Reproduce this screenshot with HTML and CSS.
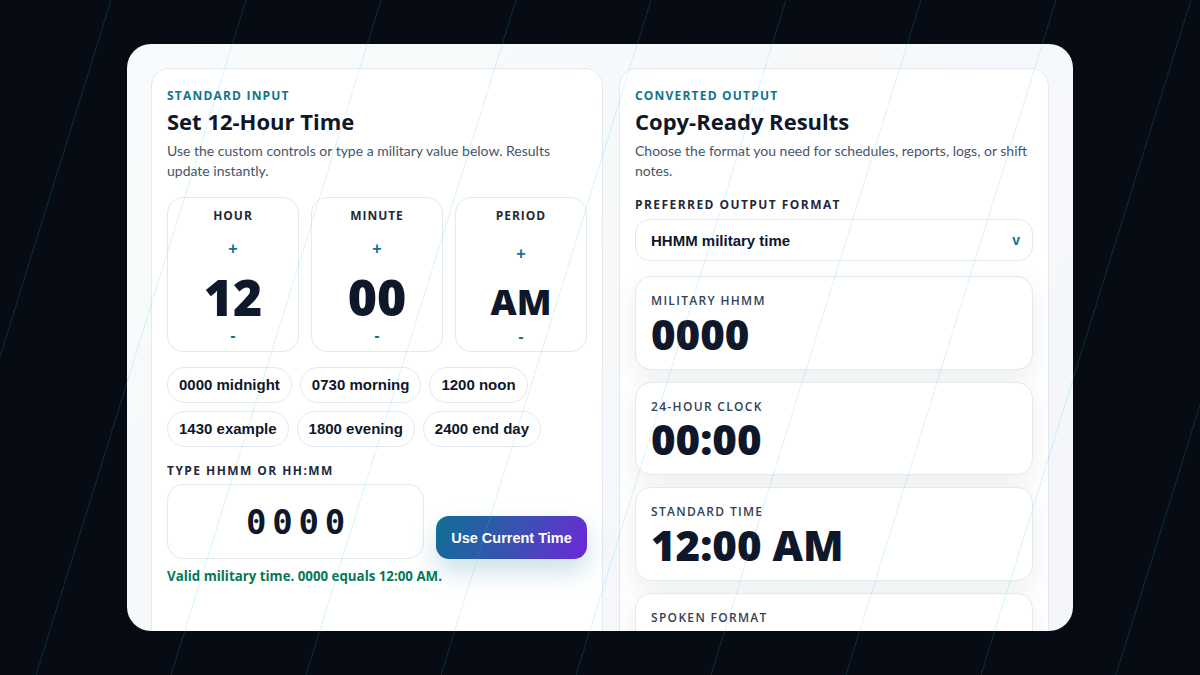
FILE: index.html
```html
<!DOCTYPE html>
<html lang="en">
<head>
<meta charset="utf-8">
<title>Military Time Converter</title>
<link rel="stylesheet" href="styles.css">
</head>
<body>
<main class="app">
  <section class="panel">
    <p class="eyebrow">Standard Input</p>
    <h1 class="panel-title">Set 12-Hour Time</h1>
    <p class="panel-desc">Use the custom controls or type a military value below. Results update instantly.</p>

    <div class="spinners">
      <div class="spinner">
        <span class="spinner-label">Hour</span>
        <button class="spin-btn spin-plus" type="button">+</button>
        <span class="spin-value">12</span>
        <button class="spin-btn spin-minus" type="button">-</button>
      </div>
      <div class="spinner">
        <span class="spinner-label">Minute</span>
        <button class="spin-btn spin-plus" type="button">+</button>
        <span class="spin-value">00</span>
        <button class="spin-btn spin-minus" type="button">-</button>
      </div>
      <div class="spinner spinner-period">
        <span class="spinner-label">Period</span>
        <button class="spin-btn spin-plus" type="button">+</button>
        <span class="spin-value">AM</span>
        <button class="spin-btn spin-minus" type="button">-</button>
      </div>
    </div>

    <div class="chips">
      <button class="chip" type="button">0000 midnight</button>
      <button class="chip" type="button">0730 morning</button>
      <button class="chip" type="button">1200 noon</button>
      <button class="chip" type="button">1430 example</button>
      <button class="chip" type="button">1800 evening</button>
      <button class="chip" type="button">2400 end day</button>
    </div>

    <label class="field-label" for="entry">Type HHMM or HH:MM</label>
    <div class="entry-row">
      <input class="entry" id="entry" type="text" value="0000">
      <button class="btn-now" type="button">Use Current Time</button>
    </div>
    <p class="status">Valid military time. 0000 equals 12:00 AM.</p>
  </section>

  <section class="panel">
    <p class="eyebrow">Converted Output</p>
    <h2 class="panel-title">Copy-Ready Results</h2>
    <p class="panel-desc">Choose the format you need for schedules, reports, logs, or shift notes.</p>

    <span class="field-label field-label-select">Preferred Output Format</span>
    <div class="select">
      <span class="select-text">HHMM military time</span>
      <span class="select-caret">v</span>
    </div>

    <div class="results">
      <div class="result">
        <span class="result-label">Military HHMM</span>
        <span class="result-value">0000</span>
      </div>
      <div class="result">
        <span class="result-label">24-Hour Clock</span>
        <span class="result-value">00:00</span>
      </div>
      <div class="result">
        <span class="result-label">Standard Time</span>
        <span class="result-value">12:00 AM</span>
      </div>
      <div class="result">
        <span class="result-label">Spoken Format</span>
        <span class="result-value result-value-text">Twelve midnight</span>
      </div>
    </div>
  </section>
</main>
</body>
</html>
```

FILE: styles.css
```css
* {
  box-sizing: border-box;
}

html, body {
  margin: 0;
  padding: 0;
}

body {
  min-height: 100vh;
  display: grid;
  place-items: center;
  background: #070b14;
  font-family: "Open Sans", "Noto Sans", sans-serif;
  color: #0f172a;
}

body::after {
  content: "";
  position: fixed;
  inset: 0;
  pointer-events: none;
  z-index: 10;
  background: repeating-linear-gradient(107.28deg,
    transparent 0 105.4px,
    rgba(34, 200, 238, 0.14) 105.4px 106.6px,
    transparent 106.6px 128.9px);
}

.app {
  width: 946px;
  height: 587px;
  padding: 24px;
  display: grid;
  grid-template-columns: minmax(0, 452fr) minmax(0, 430fr);
  gap: 16px;
  align-items: stretch;
  overflow: hidden;
  border-radius: 24px;
  background: linear-gradient(135deg, #f8fbfc 0%, #f4f6f9 100%);
}

.panel {
  min-width: 0;
  background: #ffffff;
  border: 1px solid #e3e9f1;
  border-radius: 18px;
  padding: 19px 15px 24px;
  display: flex;
  flex-direction: column;
}

.eyebrow {
  margin: 0;
  font-size: 12px;
  line-height: 16px;
  font-weight: 700;
  letter-spacing: 0.1em;
  text-transform: uppercase;
  color: #0e7490;
}

.panel-title {
  margin: 3px 0 0;
  font-size: 22px;
  line-height: 28px;
  font-weight: 700;
  color: #0f172a;
}

.panel-desc {
  margin: 6px 0 0;
  font-family: Lato, "Open Sans", sans-serif;
  font-size: 14px;
  line-height: 20px;
  color: #475569;
}

.spinners {
  margin-top: 15.5px;
  display: grid;
  grid-template-columns: repeat(3, minmax(0, 1fr));
  gap: 12px;
}

.spinner {
  height: 155px;
  border: 1px solid #e3e9f1;
  border-radius: 16px;
  background: #ffffff;
  padding: 10.5px 8px 0;
  display: flex;
  flex-direction: column;
  align-items: center;
}

.spinner-label {
  font-size: 12px;
  line-height: 16px;
  font-weight: 700;
  letter-spacing: 0.08em;
  text-transform: uppercase;
  color: #1e293b;
}

.spin-btn {
  border: 0;
  background: transparent;
  padding: 0;
  width: 32px;
  height: 24px;
  font-family: "Liberation Sans", Arial, sans-serif;
  font-size: 16px;
  line-height: 24px;
  font-weight: 700;
  color: #0e7490;
}

.spin-plus {
  margin-top: 12.5px;
}

.spin-value {
  margin-top: 13px;
  height: 46px;
  font-size: 50px;
  line-height: 46px;
  font-weight: 800;
  color: #0f172a;
}

.spin-minus {
  margin-top: 4px;
}

.spinner-period .spin-plus {
  margin-top: 17.5px;
}

.spinner-period .spin-value {
  margin-top: 16.5px;
  height: 40px;
  font-size: 36px;
  line-height: 40px;
}

.spinner-period .spin-minus {
  margin-top: 3px;
}

.chips {
  margin-top: 15px;
  display: flex;
  flex-wrap: wrap;
  gap: 8px;
}

.chip {
  border: 1px solid #e3e9f1;
  border-radius: 999px;
  background: #ffffff;
  padding: 8px 11px;
  font-family: "Liberation Sans", Arial, sans-serif;
  font-size: 15px;
  line-height: 18px;
  font-weight: 700;
  color: #0f172a;
}

.field-label {
  margin-top: 16.5px;
  font-size: 12px;
  line-height: 16px;
  font-weight: 700;
  letter-spacing: 0.12em;
  text-transform: uppercase;
  color: #1e293b;
}

.field-label-select {
  margin-top: 16px;
}

.entry-row {
  margin-top: 5.4px;
  display: flex;
  align-items: flex-end;
  gap: 12px;
}

.entry {
  flex: 1 1 0;
  min-width: 0;
  width: 0;
  height: 75px;
  border: 1px solid #e3e9f1;
  border-radius: 16px;
  background: #ffffff;
  padding: 0 0 0 6px;
  text-align: center;
  font-family: "DejaVu Sans Mono", "Liberation Mono", monospace;
  font-size: 34px;
  font-weight: 700;
  letter-spacing: 0.17em;
  color: #0f172a;
  outline: none;
}

.btn-now {
  flex: none;
  width: 151px;
  height: 43px;
  padding: 0;
  border: 0;
  border-radius: 13px;
  background: linear-gradient(115deg, #0f6f93 0%, #3d4fb5 55%, #6d28d9 100%);
  box-shadow: 0 12px 26px rgba(14, 116, 144, 0.22);
  font-family: "Liberation Sans", Arial, sans-serif;
  font-size: 14.5px;
  font-weight: 700;
  color: #ffffff;
}

.status {
  margin: 7.8px 0 0;
  font-size: 13.3px;
  line-height: 18px;
  font-weight: 700;
  color: #047857;
}

.select {
  margin-top: 6.4px;
  height: 42px;
  border: 1px solid #e3e9f1;
  border-radius: 14px;
  background: #ffffff;
  padding: 0 12px 0 15px;
  display: flex;
  align-items: center;
  justify-content: space-between;
}

.select-text {
  font-family: "Liberation Sans", Arial, sans-serif;
  font-size: 15px;
  font-weight: 700;
  color: #0f172a;
}

.select-caret {
  font-family: "Liberation Sans", Arial, sans-serif;
  font-size: 14px;
  font-weight: 700;
  color: #0e7490;
}

.results {
  margin-top: 15px;
  display: flex;
  flex-direction: column;
  gap: 12px;
}

.result {
  border: 1px solid #e3e9f1;
  border-radius: 16px;
  background: #ffffff;
  padding: 16px 15px 13px;
  display: flex;
  flex-direction: column;
  box-shadow: 0 10px 28px rgba(15, 23, 42, 0.07);
}

.result-label {
  font-size: 12px;
  line-height: 16px;
  font-weight: 600;
  letter-spacing: 0.11em;
  text-transform: uppercase;
  color: #334155;
}

.result-value {
  margin-top: 2.4px;
  font-size: 42px;
  line-height: 44px;
  font-weight: 800;
  color: #0f172a;
  white-space: nowrap;
}

.result-value-text {
  font-size: 28px;
}
```
